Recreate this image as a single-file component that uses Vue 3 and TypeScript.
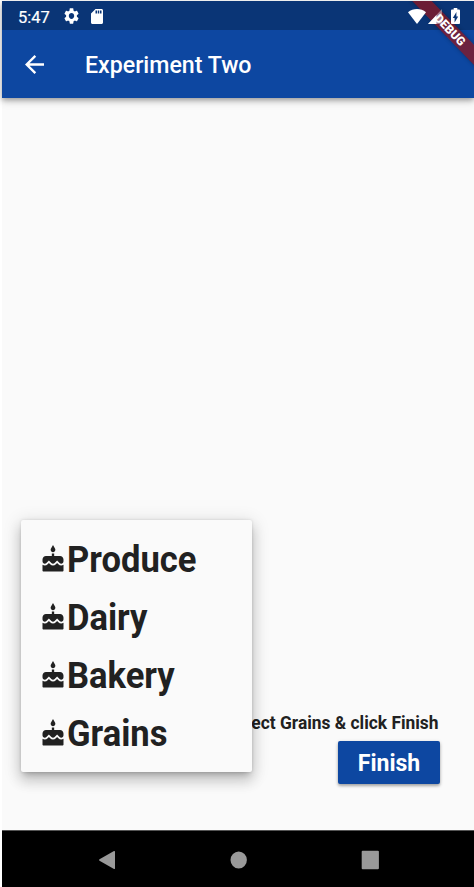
<script setup lang="ts">
const categories: string[] = ['Produce', 'Dairy', 'Bakery', 'Grains']
</script>

<template>
  <div class="device">
    <header class="top">
      <div class="status">
        <span class="clock">5:47</span>
        <svg class="gear" viewBox="2 2 20 20" preserveAspectRatio="none"><path d="M19.14 12.94c.04-.3.06-.61.06-.94 0-.32-.02-.64-.07-.94l2.03-1.58c.18-.14.23-.41.12-.61l-1.92-3.32c-.12-.22-.37-.29-.59-.22l-2.39.96c-.5-.38-1.03-.7-1.62-.94l-.36-2.54c-.04-.24-.24-.41-.48-.41h-3.84c-.24 0-.43.17-.47.41l-.36 2.54c-.59.24-1.13.57-1.62.94l-2.39-.96c-.22-.08-.47 0-.59.22L2.74 8.87c-.12.21-.08.47.12.61l2.03 1.58c-.05.3-.09.63-.09.94s.02.64.07.94l-2.03 1.58c-.18.14-.23.41-.12.61l1.92 3.32c.12.22.37.29.59.22l2.39-.96c.5.38 1.03.7 1.62.94l.36 2.54c.05.24.24.41.48.41h3.84c.24 0 .44-.17.47-.41l.36-2.54c.59-.24 1.13-.56 1.62-.94l2.39.96c.22.08.47 0 .59-.22l1.92-3.32c.12-.22.07-.47-.12-.61l-2.01-1.58zM12 15.6c-1.98 0-3.6-1.62-3.6-3.6s1.62-3.6 3.6-3.6 3.6 1.62 3.6 3.6-1.62 3.6-3.6 3.6z" /></svg>
        <svg class="card" viewBox="4 2 16 20" preserveAspectRatio="none"><path d="M18 2h-8L4.02 8 4 20c0 1.1.9 2 2 2h12c1.1 0 2-.9 2-2V4c0-1.1-.9-2-2-2zm-6 6h-2V4h2v4zm3 0h-2V4h2v4zm3 0h-2V4h2v4z" /></svg>
        <span class="spacer"></span>
        <svg class="wifi" viewBox="0 0 18 15" preserveAspectRatio="none"><path d="M9 15 0 3.200C5-1 13-1 18 3.200z" /></svg>
        <svg class="signal" viewBox="0 0 14 15" preserveAspectRatio="none">
          <path d="M0 15 14 0V15z" fill-opacity=".4" />
          <path d="M0 15 8.500 5.900V15z" />
        </svg>
        <svg class="battery" viewBox="7 2 10 20" preserveAspectRatio="none"><path d="M15.670 4H14V2h-4v2H8.330C7.600 4 7 4.600 7 5.330v15.330C7 21.400 7.600 22 8.330 22h7.330c.74 0 1.340-.6 1.340-1.330V5.330C17 4.600 16.400 4 15.670 4zM11 20v-5.500H9L13 7v5.500h2L11 20z" /></svg>
      </div>
      <div class="appbar">
        <svg class="back" viewBox="4 4 16 16" preserveAspectRatio="none"><path d="M20 11H7.830l5.590-5.590L12 4l-8 8 8 8 1.410-1.410L7.830 13H20v-2z" /></svg>
        <h1>Experiment Two</h1>
      </div>
      <div class="debug"><span>DEBUG</span></div>
    </header>
    <main>
      <p class="hint">Select Grains &amp; click Finish</p>
      <button class="finish"><span>Finish</span></button>
      <ul class="menu">
        <li v-for="name in categories" :key="name">
          <svg class="cake" viewBox="0 0 24 24" preserveAspectRatio="none"><path d="M12 6c1.110 0 2-.9 2-2 0-.38-.1-.73-.29-1.030L12 0l-1.710 2.970c-.19.3-.29.65-.29 1.030 0 1.100.9 2 2 2zm4.600 9.990l-1.070-1.070-1.080 1.070c-1.300 1.300-3.580 1.310-4.890 0l-1.070-1.070-1.090 1.070C6.750 16.640 5.880 17 4.960 17c-.73 0-1.400-.23-1.960-.61V21c0 .55.45 1 1 1h16c.55 0 1-.45 1-1v-4.610c-.56.38-1.230.61-1.960.61-.92 0-1.790-.36-2.440-1.010zM18 9h-5V7h-2v2H6c-1.660 0-3 1.340-3 3v1.540c0 1.080.88 1.960 1.960 1.960.52 0 1.020-.2 1.380-.57l2.140-2.130 2.130 2.130c.74.74 2.030.74 2.770 0l2.140-2.130 2.130 2.130c.37.37.86.57 1.380.57 1.080 0 1.960-.88 1.960-1.960V12C21 10.340 19.660 9 18 9z" /></svg>
          <span class="label">{{ name }}</span>
        </li>
      </ul>
    </main>
    <nav>
      <svg viewBox="0 0 18 20"><path d="M16 1 1.500 9.300q-1 .7 0 1.400L16 19q1 .3 1-.8V1.800q0-1.100-1-.8z" /></svg>
      <svg viewBox="0 0 18 20"><ellipse cx="9.700" cy="10" rx="8.200" ry="8.600" /></svg>
      <svg viewBox="0 0 18 20"><rect x=".7" y=".8" width="17.200" height="18.400" rx="1" /></svg>
    </nav>
  </div>
</template>

<style>
body { margin: 0; background: #fff; }
</style>

<style scoped>
.device {
  box-sizing: border-box;
  width: 474px;
  height: 887px;
  padding: 1px 0 0 2px;
  display: flex;
  flex-direction: column;
  overflow: hidden;
  font-family: Roboto, "Liberation Sans", sans-serif;
  color: #212121;
}
svg { display: block; flex: none; fill: #fff; }
.top {
  position: relative;
  z-index: 1;
  height: 97px;
  flex: none;
  background: #0d47a1;
  box-shadow: 0 2px 5px rgba(0, 0, 0, .3), 0 4px 8px rgba(0, 0, 0, .13);
  color: #fff;
}
.status {
  height: 29px;
  box-sizing: border-box;
  padding: 1px 14px 0 16px;
  display: flex;
  align-items: center;
  background: #0a3576;
}
/* system icons stay above the debug banner */
.status svg { position: relative; z-index: 1; }
.clock { width: 46px; margin-top: 2px; font-size: 17px; font-weight: 400; -webkit-text-stroke: .2px #fff; line-height: 20px; transform: scaleX(.97); transform-origin: left; }
.gear { width: 15px; height: 16px; }
.card { width: 12px; height: 15px; margin-left: 12px; }
.spacer { flex: 1; }
.wifi { width: 18px; height: 15px; }
.signal { width: 14px; height: 15px; margin-left: 2px; }
.battery { width: 9px; height: 16px; margin-left: 9px; }
.appbar { height: 68px; display: flex; align-items: center; padding-left: 23px; }
.back { width: 19px; height: 19px; }
h1 {
  margin: 2px 0 0 41px;
  font-size: 24px;
  line-height: 30px;
  font-weight: 500;
  white-space: nowrap;
  transform-origin: left;
  transform: scaleX(.965);
}
.debug {
  position: absolute;
  top: 0;
  right: 0;
  width: 66px;
  height: 70px;
  overflow: hidden;
}
.debug span {
  position: absolute;
  left: -13px;
  top: 22px;
  width: 110px;
  height: 14px;
  background: rgba(140, 22, 32, .75);
  box-shadow: 0 0 4px rgba(0, 0, 0, .3);
  font-size: 12px;
  line-height: 15px;
  font-weight: 900;
  text-align: center;
  transform: rotate(46deg);
}
main {
  position: relative;
  flex: 1;
  display: flex;
  flex-direction: column;
  justify-content: flex-end;
  align-items: flex-end;
  padding: 0 34px 46px 0;
  background: #fafafa;
}
.hint {
  margin: 0 1px 6px 0;
  font-size: 18px;
  line-height: 24px;
  font-weight: 700;
  white-space: nowrap;
  transform-origin: right;
  transform: scaleX(.965);
}
.finish {
  width: 102px;
  height: 43px;
  padding: 0;
  border: 0;
  border-radius: 2px;
  background: #0d47a1;
  color: #fff;
  font: 700 24px/44px Roboto, sans-serif;
  box-shadow: 0 2px 3px rgba(0, 0, 0, .28), 0 1px 4px rgba(0, 0, 0, .13);
}
.finish span { display: block; transform: scaleX(.96); }
.menu {
  position: absolute;
  left: 19px;
  bottom: 58px;
  width: 231px;
  height: 252px;
  box-sizing: border-box;
  margin: 0;
  padding: 10px 0 9px 18px;
  list-style: none;
  background: #fafafa;
  border-radius: 2px;
  box-shadow: 0 5px 6px -3px rgba(0, 0, 0, .2), 0 9px 13px 1px rgba(0, 0, 0, .14), 0 3px 17px 2px rgba(0, 0, 0, .12), 0 0 3px rgba(0, 0, 0, .12);
}
.menu li { height: 58.200px; display: flex; align-items: center; }
.cake { width: 28px; height: 29px; fill: #212121; }
.label {
  margin-top: 1px;
  font-size: 36px;
  line-height: 42px;
  font-weight: 700;
  transform-origin: left;
  transform: scaleX(.96);
}
nav {
  height: 57px;
  flex: none;
  display: flex;
  align-items: center;
  justify-content: center;
  gap: 113.500px;
  padding-top: 1px;
  box-sizing: border-box;
  border-top: 1px solid #555;
  background: #000;
}
nav svg { width: 18px; height: 20px; fill: #999; }
</style>
